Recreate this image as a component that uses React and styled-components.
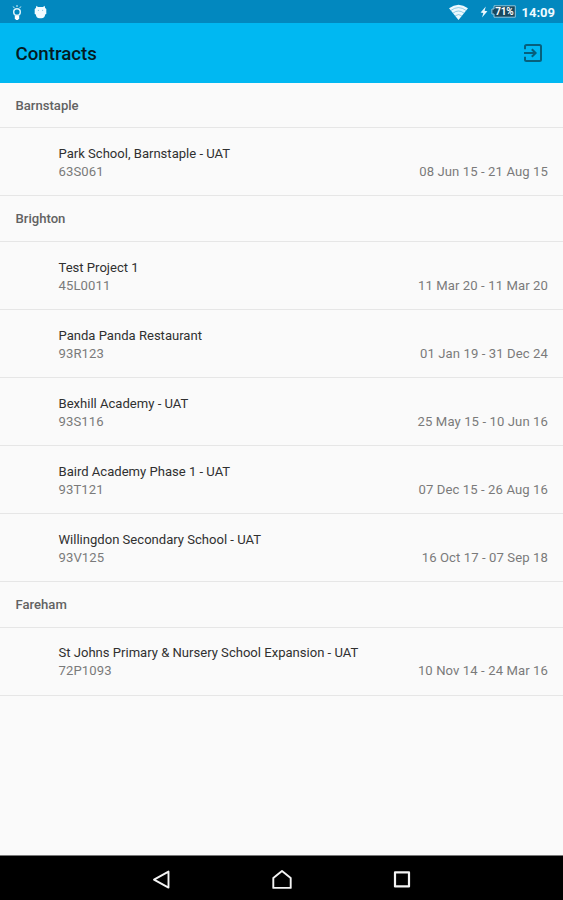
import React from 'react'
import styled, { createGlobalStyle } from 'styled-components'

const GlobalStyle = createGlobalStyle`
  body {
    margin: 0;
    background: #fafafa;
    font-family: Roboto, "Liberation Sans", sans-serif;
  }
`

const Screen = styled.div`
  display: flex;
  flex-direction: column;
  height: 900px;
  overflow: hidden;
`

const StatusBar = styled.div`
  display: flex;
  flex: none;
  align-items: center;
  justify-content: space-between;
  height: 23px;
  padding: 0 8px 0 11px;
  box-sizing: border-box;
  background: #0288bf;
`

const StatusGroup = styled.div`
  display: flex;
  align-items: center;
  gap: ${props => props.$gap}px;
  height: 23px;

  svg {
    display: block;
  }
`

const Power = styled.div`
  display: flex;
  align-items: center;
  gap: 3px;
  margin-left: 6px;
`

const Clock = styled.span`
  color: #f0faff;
  font-size: 13px;
  font-weight: 700;
  line-height: 23px;
  padding-top: 2px;
`

const AppBar = styled.header`
  display: flex;
  flex: none;
  align-items: center;
  justify-content: space-between;
  height: 59.7px;
  padding: 0 20px 0 15.5px;
  box-sizing: border-box;
  background: #00b8f2;
`

const Title = styled.h1`
  margin: 0;
  padding-top: 3px;
  color: #041a22;
  font-size: 18.7px;
  font-weight: 500;
  line-height: 24px;
`

const List = styled.main`
  flex: 1;
`

const SectionTitle = styled.h2`
  height: 45.7px;
  margin: 0;
  padding-left: 15.5px;
  box-sizing: border-box;
  border-bottom: 1px solid #e6e6e6;
  color: #626262;
  font-size: 13.1px;
  font-weight: 500;
  line-height: 46px;
`

const Row = styled.div`
  display: flex;
  align-items: flex-end;
  justify-content: space-between;
  height: 67.98px;
  padding: 0 15px 14.1px 58.5px;
  box-sizing: border-box;
  border-bottom: 1px solid #e6e6e6;
`

const Name = styled.div`
  color: #303030;
  font-size: 13.07px;
  line-height: 18px;
`

const Detail = styled.div`
  color: #7a7a7a;
  font-size: 13.1px;
  letter-spacing: 0.1px;
  line-height: 18px;
`

const NavBar = styled.nav`
  display: flex;
  flex: none;
  align-items: center;
  justify-content: center;
  gap: 96px;
  height: 45px;
  padding-top: 3px;
  box-sizing: border-box;
  border-top: 1px solid #777;
  background: #000;

  svg {
    display: block;
  }
`

const sections = [
  {
    town: 'Barnstaple',
    contracts: [
      { name: 'Park School, Barnstaple - UAT', code: '63S061', dates: '08 Jun 15 - 21 Aug 15' },
    ],
  },
  {
    town: 'Brighton',
    contracts: [
      { name: 'Test Project 1', code: '45L0011', dates: '11 Mar 20 - 11 Mar 20' },
      { name: 'Panda Panda Restaurant', code: '93R123', dates: '01 Jan 19 - 31 Dec 24' },
      { name: 'Bexhill Academy - UAT', code: '93S116', dates: '25 May 15 - 10 Jun 16' },
      { name: 'Baird Academy Phase 1 - UAT', code: '93T121', dates: '07 Dec 15 - 26 Aug 16' },
      { name: 'Willingdon Secondary School - UAT', code: '93V125', dates: '16 Oct 17 - 07 Sep 18' },
    ],
  },
  {
    town: 'Fareham',
    contracts: [
      { name: 'St Johns Primary & Nursery School Expansion - UAT', code: '72P1093', dates: '10 Nov 14 - 24 Mar 16' },
    ],
  },
]

const BulbIcon = () => (
  <svg width="12" height="16" viewBox="0 0 12 16" fill="none" stroke="#d9f1fa">
    <circle cx="6" cy="8" r="3.3" strokeWidth="1.5" />
    <path d="M6 1v2M2.2 2.5l1.100 1.500M9.800 2.500L8.700 4" strokeWidth="1" />
    <path d="M3.800 11.500h4.400v3L6.900 16H5.100l-1.300-1.500z" fill="#fff" stroke="none" />
  </svg>
)

const AndroidIcon = () => (
  <svg width="13" height="14" viewBox="0 0 13 14">
    <path d="M2.400.8L4 2h5L10.600.8l.5 2.200 1.200.9v5l-1.200.6c0 2.300-1.400 3.700-3.600 3.700h-2c-2.200 0-3.600-1.400-3.600-3.700L.7 8.900v-5L1.900 3z" fill="#f2fbff" />
    <circle cx="4.400" cy="5.400" r=".6" fill="#8fcbe4" />
    <circle cx="8.600" cy="5.400" r=".6" fill="#8fcbe4" />
  </svg>
)

const WifiIcon = () => (
  <svg width="19" height="16" viewBox="0 0 19 16">
    <path d="M0 4.300Q9.500-3 19 4.300L9.500 16z" fill="#ecf8fd" />
    <path d="M1.800 6.500q7.700-5.800 15.400 0M4 9.100q5.500-4.200 11 0M6.200 11.800q3.300-2.500 6.600 0" fill="none" stroke="#53acd3" strokeWidth=".6" />
  </svg>
)

const BoltIcon = () => (
  <svg width="8" height="12" viewBox="0 0 8 12">
    <path d="M5.800.5L.6 6.600l2.700.4L2 11.500l5.400-6.300-2.800-.5z" fill="#e8f7fd" />
  </svg>
)

const BatteryIcon = () => (
  <svg width="25" height="13" viewBox="0 0 25 13">
    <path d="M3 .8h21.300v11.400H3V9H.9V4H3z" fill="#17495f" stroke="#8fc9e1" strokeWidth="1" />
    <text x="13.400" y="10.200" fill="#fff" fontSize="10" fontWeight="700" textAnchor="middle" textLength="18.500">71%</text>
  </svg>
)

const ExitIcon = () => (
  <svg width="20" height="20" viewBox="0 0 20 20" fill="none" stroke="#075f7c" strokeWidth="2">
    <path d="M2 6.300V3.500Q2 2 3.500 2h13Q18 2 18 3.500v13q0 1.500-1.500 1.500h-13Q2 18 2 16.500v-2.800" />
    <path d="M1 10h11.500M8.800 6.200l3.800 3.800-3.800 3.800" />
  </svg>
)

const BackIcon = () => (
  <svg width="24" height="24" viewBox="0 0 24 24">
    <path d="M18.500 3.600v16L4 11.600z" fill="none" stroke="#f4f4f4" strokeWidth="1.900" strokeLinejoin="round" />
  </svg>
)

const HomeIcon = () => (
  <svg width="24" height="24" viewBox="0 0 24 24">
    <path d="M12 3l8.700 7v9.900H3.300V10z" fill="none" stroke="#f4f4f4" strokeWidth="1.900" strokeLinejoin="round" />
  </svg>
)

const RecentIcon = () => (
  <svg width="24" height="24" viewBox="0 0 24 24">
    <rect x="5" y="4.400" width="14" height="14" fill="none" stroke="#f4f4f4" strokeWidth="2.200" strokeLinejoin="round" />
  </svg>
)

export default class App extends React.Component {
  render() {
    return (
      <Screen>
        <GlobalStyle />
        <StatusBar>
          <StatusGroup $gap={11}>
            <BulbIcon />
            <AndroidIcon />
          </StatusGroup>
          <StatusGroup $gap={6}>
            <WifiIcon />
            <Power>
              <BoltIcon />
              <BatteryIcon />
            </Power>
            <Clock>14:09</Clock>
          </StatusGroup>
        </StatusBar>

        <AppBar>
          <Title>Contracts</Title>
          <ExitIcon />
        </AppBar>

        <List>
          {sections.map(section => (
            <section key={section.town}>
              <SectionTitle>{section.town}</SectionTitle>
              {section.contracts.map(contract => (
                <Row key={contract.code}>
                  <div>
                    <Name>{contract.name}</Name>
                    <Detail>{contract.code}</Detail>
                  </div>
                  <Detail>{contract.dates}</Detail>
                </Row>
              ))}
            </section>
          ))}
        </List>

        <NavBar>
          <BackIcon />
          <HomeIcon />
          <RecentIcon />
        </NavBar>
      </Screen>
    )
  }
}
